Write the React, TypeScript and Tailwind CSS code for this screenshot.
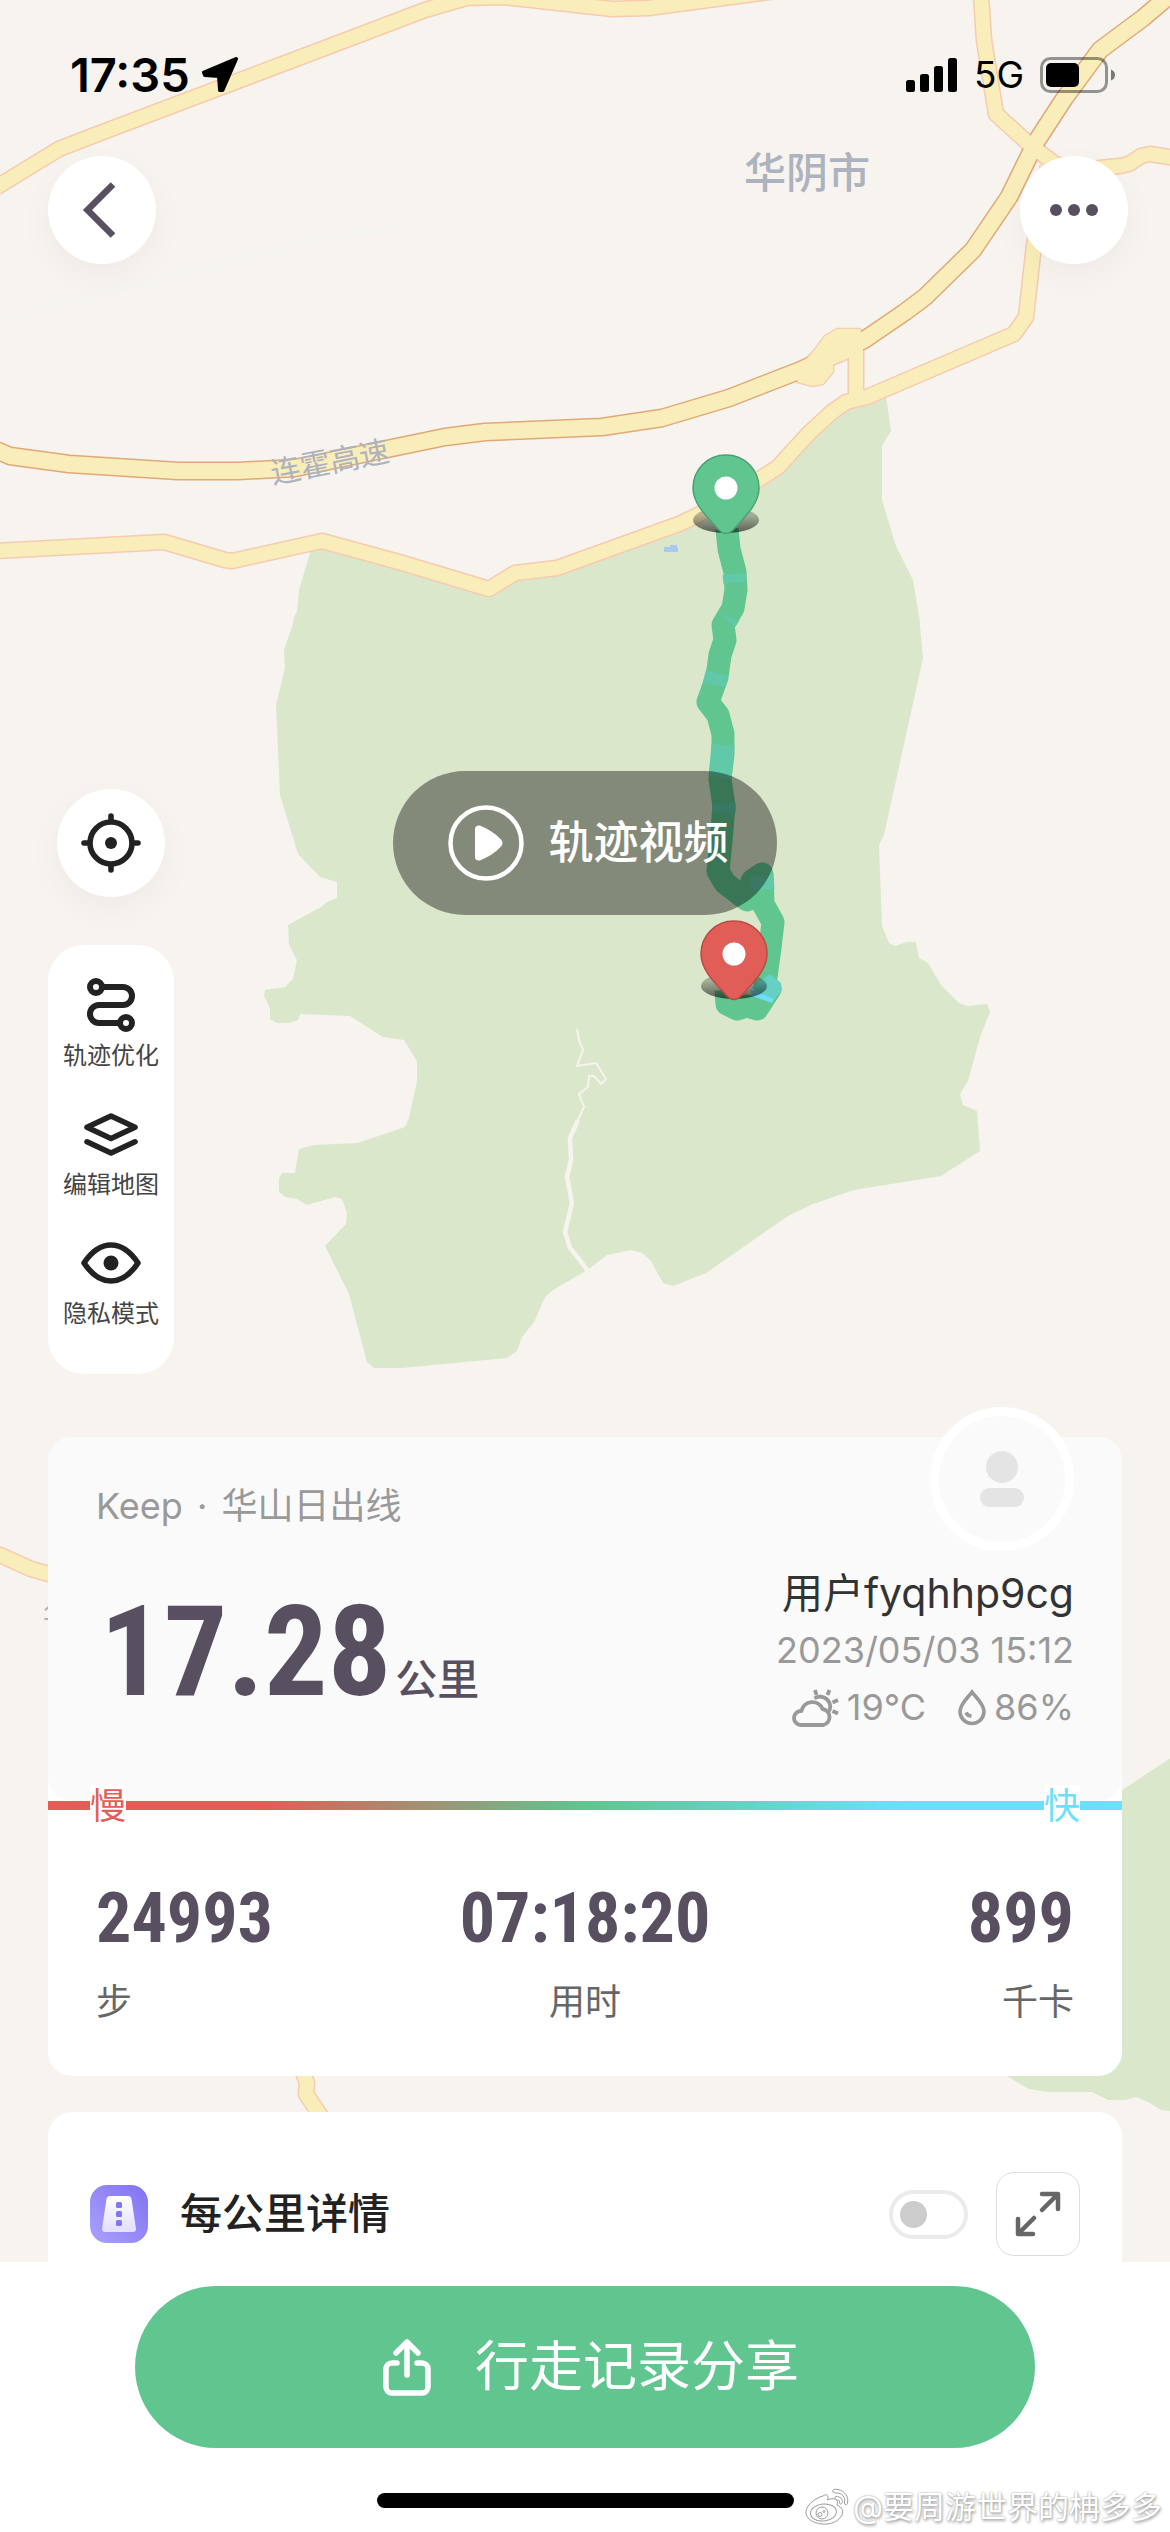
import type { ReactNode } from 'react';

const tools = [
  { label: '轨迹优化', icon: <RouteIcon /> },
  { label: '编辑地图', icon: <LayersIcon /> },
  { label: '隐私模式', icon: <EyeIcon /> },
];

const stats = [
  { value: '24993', label: '步', align: 'text-left' },
  { value: '07:18:20', label: '用时', align: 'text-center' },
  { value: '899', label: '千卡', align: 'text-right' },
];

const park =
  'M310 553 L322 541 L399 562 L489 589 L515 573 L557 568 L679 524 L755 482 L809 433 L842 405 L886 396 L891 431 L882 446 L882 500 L896 546 L913 580 L919 615 L923 658 L884 835 L879 845 L882 926 L889 943 L895 946 L907 942 L916 942 L919 958 L928 963 L941 985 L959 1003 L967 1006 L987 1004 L990 1012 L980 1037 L968 1081 L960 1094 L963 1105 L977 1111 L980 1151 L941 1176 L854 1190 L813 1204 L788 1216 L706 1273 L673 1286 L663 1283 L651 1261 L642 1253 L631 1250 L607 1255 L590 1268 L584 1272 L553 1290 L545 1297 L534 1322 L522 1337 L517 1351 L507 1358 L402 1368 L374 1368 L367 1362 L349 1294 L325 1246 L346 1224 L347 1213 L342 1199 L335 1197 L307 1205 L297 1199 L285 1197 L279 1192 L279 1178 L282 1173 L295 1173 L299 1149 L314 1145 L358 1143 L405 1127 L409 1118 L417 1081 L417 1061 L404 1040 L383 1037 L350 1016 L300 1014 L298 1020 L289 1023 L277 1023 L270 1019 L270 1008 L264 996 L265 990 L285 987 L293 979 L297 960 L289 945 L288 925 L321 907 L327 902 L337 898 L337 882 L320 877 L298 854 L280 795 L278 750 L276 705 L285 668 L284 650 L293 624 L294 617 L297 612 L299 590 Z';

const localRoads = [
  'M-4 188 L0 185 L59 149 L95 135 L325 48 L425 10 L466 -2 L504 -3 L612 9 L648 8 L746 -5 L830 -16',
  'M-4 551 L164 542 L225 560 L232 561 L322 541 L399 562 L489 589 L515 573 L557 568 L679 524 L700 514 L755 482 L778 467 L809 433 L832 412 L846 402 L867 397 L1014 334 L1026 317 L1034 245 L1048 166',
  'M980 -20 L984 40 L996 114 L1029 144 L1055 164 L1080 170 L1120 166 L1129 164 L1141 156 L1150 154 L1176 158',
  'M856 345 L856 398',
  'M-4 1554 L0 1555 L31 1569 L60 1577',
  'M300 2064 L307 2083 L306 2094 L322 2118',
];

const highway =
  'M-4 450 L10 456 L69 464 L178 471 L238 471 L295 468 L445 437 L485 432 L602 427 L662 418 L729 398 L801 370 L864 340 L905 312 L925 297 L973 250 L1009 197 L1036 142 L1064 99 L1100 50 L1143 18 L1176 -10';

const interchange =
  'M806 359 L813 352 L825 336 L837 329 L860 329 L866 345 L847 359 L833 365 L833 372 L823 384 L813 386 L797 382 Z';

const track =
  'M727 529 L729 549 L735 572 L736 590 L733 608 L723 625 L725 640 L720 655 L717 677 L708 702 L718 715 L723 734 L723 754 L720 779 L724 806 L721 841 L718 871 L725 883 L747 900 L752 881 L762 874 L763 904 L773 922 L770 948 L765 984 L770 989 L757 1009 L747 1006 L737 1009 L727 1004 L726 990';

function MapPin({ x, y, color, edge }: { x: number; y: number; color: string; edge: string }) {
  return (
    <g transform={`translate(${x} ${y})`}>
      <ellipse cx="0" cy="32" rx="33" ry="13" fill="url(#pinShadow)" />
      <path
        d="M0 -33 C19 -33 33 -18 33 0 C33 16 19 29 6 43 Q0 48 -6 43 C-19 29 -33 16 -33 0 C-33 -18 -19 -33 0 -33 Z"
        fill={color}
        stroke={edge}
        strokeWidth="1.5"
      />
      <circle r="11.5" fill="#fff" />
    </g>
  );
}

function TrackMap() {
  return (
    <svg
      aria-hidden="true"
      className="absolute inset-0 h-full w-full"
      viewBox="0 0 1170 2532"
      preserveAspectRatio="xMidYMin slice"
      fill="none"
    >
      <defs>
        <linearGradient id="pinShadow" x1="0" y1="0" x2="0" y2="1">
          <stop offset="0.3" stopColor="#000" stopOpacity="0.25" />
          <stop offset="1" stopColor="#000" stopOpacity="0.6" />
        </linearGradient>
      </defs>
      <path d={park} fill="#dae7cb" />
      <path
        d="M1180 1752 L1122 1790 L1000 1850 L1000 2072 L1029 2089 L1048 2092 L1092 2092 L1108 2100 L1125 2100 L1136 2097 L1148 2102 L1161 2110 L1180 2112 Z"
        fill="#dae7cb"
      />
      <path
        d="M577 1029 L579 1040 L583 1050 L577 1066 L596 1063 L606 1079 L601 1084 L594 1076 L589 1076 L588 1087 L579 1094 L584 1107 L577 1122"
        stroke="#f7f3ee"
        strokeWidth="2"
      />
      <path
        d="M578 1120 L570 1138 L571 1160 L567 1177 L572 1203 L565 1232 L570 1248 L579 1259 L590 1274"
        stroke="#f7f3ee"
        strokeWidth="4.5"
      />
      <path d="M0 320 L164 276 L325 237 L392 229" stroke="#f5f5f0" strokeWidth="3" />
      <path d="M664 547 h6 v-2 h7 v3 h1 v4 h-14 Z" fill="#a9c9ee" />

      <g strokeLinejoin="round">
        {localRoads.map((d) => (
          <path key={d} d={d} stroke="#f6cbb0" strokeWidth="17" />
        ))}
        <path d={interchange} stroke="#f6cbb0" strokeWidth="2.5" />
        <path d={highway} stroke="#e0a879" strokeWidth="19" />
        {localRoads.map((d) => (
          <path key={d} d={d} stroke="#f9edb9" strokeWidth="14" />
        ))}
        <path d={highway} stroke="#f9edb9" strokeWidth="16" />
        <path d={interchange} fill="#f9edb9" />
      </g>

      <g className="font-['Noto_Sans_CJK_SC',sans-serif]" fill="#adb2bf">
        <text x="744" y="188" fontSize="42" fontWeight="500">华阴市</text>
        <text x="43" y="1624" fontSize="26">华</text>
        <text fontSize="30" transform="translate(273 484) rotate(-11)">连霍高速</text>
      </g>

      <g strokeWidth="23" strokeLinejoin="round">
        <path d={track} stroke="#60c58f" />
        <g stroke="#61c9a8">
          <path d="M734 574 L735 583" />
          <path d="M717 673 L714 685" />
          <path d="M723 745 L720 777" />
          <path d="M724 803 L724 813" />
          <path d="M762 876 L763 890" />
        </g>
        <path d="M718 612 L739 621 L735 627 Z" fill="#61c9a8" />
      </g>
      <path d="M752 987 L770 974 L781 983 L782 990 L774 1000 L758 996 Z" fill="#66d0c4" />
      <path d="M750 989 L774 999 L772 1003 L752 996 Z" fill="#6ddefa" />
      <MapPin x={726} y={488} color="#60c58f" edge="#4ca077" />
      <MapPin x={734} y={954} color="#e15d57" edge="#bb4a45" />
    </svg>
  );
}

function RouteIcon() {
  return (
    <svg width="48" height="54" viewBox="0 0 48 54" fill="none" stroke="currentColor" strokeWidth="6">
      <circle cx="9" cy="9" r="6" />
      <path d="M15 9 H36 a9 9 0 0 1 0 18 H12 a9 9 0 0 0 0 18 H33" />
      <circle cx="39" cy="45" r="6" />
    </svg>
  );
}

function LayersIcon() {
  return (
    <svg width="54" height="43" viewBox="0 0 54 43" fill="none" stroke="currentColor" strokeWidth="5.6" strokeLinecap="round" strokeLinejoin="round">
      <path d="M3 14.3 L27 3 L51 14.3 L27 25.5 Z" />
      <path d="M3 28.8 L27 40 L51 28.8" />
    </svg>
  );
}

function EyeIcon() {
  return (
    <svg width="60" height="42" viewBox="0 0 60 42" fill="none" stroke="currentColor" strokeWidth="5.6" strokeLinejoin="round">
      <path d="M3 21 C11 9 20 3 30 3 S49 9 57 21 C49 33 40 39 30 39 S11 33 3 21 Z" />
      <circle cx="30" cy="21" r="7.5" fill="currentColor" stroke="none" />
    </svg>
  );
}

function LocateIcon() {
  return (
    <svg width="60" height="60" viewBox="0 0 60 60" fill="none" stroke="currentColor" strokeWidth="5.6" strokeLinecap="round">
      <circle cx="30" cy="30" r="21" />
      <circle cx="30" cy="30" r="6" fill="currentColor" stroke="none" />
      <path d="M30 3 V8 M30 52 V57 M3 30 H8 M52 30 H57" />
    </svg>
  );
}

function WeatherIcon() {
  return (
    <svg width="47" height="38" viewBox="0 0 47 38" fill="none" stroke="currentColor" strokeWidth="3.8">
      <path d="M8.5 36 A7 7 0 0 1 9.5 22 A11 11 0 0 1 30.5 20 A8.2 8.2 0 0 1 31.5 36 Z" strokeLinejoin="round" />
      <path d="M22.5 9.5 A10 10 0 0 1 36 24" />
      <path d="M23 1 L24.5 6 M37.5 1 L35.5 6 M40.5 13.5 L46 11 M40.5 22 L46 24.5" />
    </svg>
  );
}

function DropIcon() {
  return (
    <svg width="28" height="37" viewBox="0 0 28 37" fill="none" stroke="currentColor" strokeWidth="3.6">
      <path d="M14 3 C10 8.5 2 15 2 22.5 a12 12 0 0 0 24 0 C26 15 18 8.5 14 3 Z" />
      <path d="M8 23.5 Q9.5 27 13.5 27" />
    </svg>
  );
}

function KilometerIcon() {
  return (
    <svg width="58" height="58" viewBox="0 0 58 58" className="shrink-0">
      <defs>
        <linearGradient id="kmBg" x1="1" y1="0" x2="0" y2="1">
          <stop offset="0" stopColor="#8172f3" />
          <stop offset="1" stopColor="#a9a1fa" />
        </linearGradient>
        <linearGradient id="kmRoad" x1="0" y1="0" x2="0" y2="1">
          <stop offset="0" stopColor="#fff" />
          <stop offset="1" stopColor="#e2defc" />
        </linearGradient>
      </defs>
      <rect width="58" height="58" rx="17" fill="url(#kmBg)" />
      <path d="M20 11 H38 Q41 11 41.5 14 L46 44 Q46 47 43 47 H15 Q12 47 12 44 L16.5 14 Q17 11 20 11 Z" fill="url(#kmRoad)" />
      <g fill="#8476f3">
        <rect x="26" y="17" width="6" height="6" rx="1.5" />
        <rect x="26" y="26" width="6" height="6" rx="1.5" />
        <rect x="26" y="35" width="6" height="6" rx="1.5" />
      </g>
    </svg>
  );
}

function WeiboIcon() {
  return (
    <svg width="44" height="38" viewBox="0 0 44 38" fill="#fff" stroke="#9c9c9c" strokeWidth="1">
      <path d="M18 8 C22 5 24 8 22.5 12 C29 9 34 11 32 17 C37 19 39 23 37 27 C34 33 26 37 17 36 C7 35 0 30 1 23 C2 17 10 10 18 8 Z" />
      <ellipse cx="18.5" cy="24.5" rx="13" ry="8.5" transform="rotate(-6 18.5 24.5)" />
      <circle cx="17" cy="25" r="6" />
      <circle cx="15" cy="26.5" r="2" />
      <circle cx="19" cy="23.5" r="1" />
      <path d="M28 4 C27 1 30 1 33 1.5 C40 3 44 9 42.5 15 C42 18 39 17 39.5 14 C40.5 9 37 5 32 5 C30 5 29 5 28 4 Z" />
      <path d="M30 10 C30 8 32 8 34 9 C37 10 38 13 37 15 C36 17 34 16 34.5 14 C35 12 33 12 31.5 12 C30.5 12 30 11 30 10 Z" />
    </svg>
  );
}

function RoundButton({ label, children }: { label: string; children: ReactNode }) {
  return (
    <button
      type="button"
      aria-label={label}
      className="flex size-[108px] items-center justify-center rounded-full bg-white shadow-[0_12px_36px_rgba(0,0,0,0.04)]"
    >
      {children}
    </button>
  );
}

function StatusBar() {
  return (
    <div className="flex items-center justify-between pt-12 pr-[54px] pb-[54px] pl-[70px] text-black">
      <div className="flex items-center gap-3">
        <span className="text-[47px] leading-[54px] font-semibold">17:35</span>
        <svg width="36" height="36" viewBox="0 0 36 36" stroke="currentColor" strokeWidth="4" strokeLinejoin="round">
          <path d="M34 2 L2 15.5 L3 18 L17 19 L18 33 L20.5 33 Z" />
        </svg>
      </div>
      <div className="flex items-center gap-4">
        <svg width="52" height="34" viewBox="0 0 52 34">
          <rect y="22" width="9" height="12" rx="2.5" />
          <rect x="14" y="16" width="9" height="18" rx="2.5" />
          <rect x="28" y="8" width="9" height="26" rx="2.5" />
          <rect x="42" width="9" height="34" rx="2.5" />
        </svg>
        <span className="text-[37px] leading-[54px]">5G</span>
        <svg width="76" height="36" viewBox="0 0 76 36">
          <rect x="1.5" y="1.5" width="65" height="33" rx="9" fill="none" stroke="#000" strokeOpacity="0.4" strokeWidth="3" />
          <rect x="6" y="6" width="33" height="24" rx="5" />
          <path d="M71 12.5 Q75 14 75 18 T71 23.5 Z" fillOpacity="0.5" />
        </svg>
      </div>
    </div>
  );
}

export default function App() {
  return (
    <main className="relative flex min-h-screen flex-col overflow-hidden bg-[#f7f3ee] font-['Inter','Noto_Sans_CJK_SC',sans-serif]">
      <TrackMap />

      <div className="relative">
        <StatusBar />
        <header className="flex items-center justify-between pr-[42px] pl-12 text-[#584f60]">
          <RoundButton label="返回">
            <svg width="108" height="108" viewBox="0 0 108 108" fill="none" stroke="currentColor" strokeWidth="6.5">
              <path d="M65 28.5 L39.5 54 L65 79.5" />
            </svg>
          </RoundButton>
          <RoundButton label="更多">
            <svg width="48" height="12" viewBox="0 0 48 12" fill="currentColor">
              <circle cx="6" cy="6" r="6" />
              <circle cx="24" cy="6" r="6" />
              <circle cx="42" cy="6" r="6" />
            </svg>
          </RoundButton>
        </header>
      </div>

      <section className="relative mt-[507px] grid grid-cols-[126px_1fr_126px] items-start px-12">
        <div className="flex flex-col items-center gap-12 pt-[18px] text-[#222]">
          <RoundButton label="定位">
            <LocateIcon />
          </RoundButton>
          <div className="flex w-full flex-col gap-[33px] rounded-[36px] bg-white pt-[30px] pb-[45px]">
            {tools.map((tool) => (
              <button key={tool.label} type="button" className="flex flex-col items-center gap-[6px]">
                <span className="flex h-[60px] items-center">{tool.icon}</span>
                <span className="text-[24px] leading-[30px] text-[#444]">{tool.label}</span>
              </button>
            ))}
          </div>
        </div>
        <button
          type="button"
          className="flex h-[144px] items-center gap-6 justify-self-center rounded-full bg-black/40 pr-12 pl-[55px] text-white"
        >
          <svg width="76" height="76" viewBox="0 0 76 76" fill="none">
            <circle cx="38" cy="38" r="35.5" stroke="currentColor" strokeWidth="4.5" />
            <path d="M27 24 Q27 20 32 20.5 C40 24 47 28 53 34.5 Q56 38 53 41.5 C47 48 40 52 32 55.5 Q27 56 27 52 Z" fill="currentColor" />
          </svg>
          <span className="text-[45px] leading-[60px] font-medium">轨迹视频</span>
        </button>
      </section>

      <div className="relative flex flex-col gap-9 px-12 pt-[63px]">
        <article className="rounded-3xl bg-white text-[#584f60]">
          <div className="flex items-start justify-between rounded-3xl bg-[#fafafa] px-12 pb-[65px]">
            <div className="pt-[45px]">
              <h1 className="text-[36px] leading-[48px] text-[#999]">
                Keep <span className="mx-1">·</span> 华山日出线
              </h1>
              <p className="mt-[72px] flex items-baseline gap-1 pl-1 leading-[100px]">
                <span className="font-['Roboto_Condensed','Roboto',sans-serif] text-[126px] font-bold">17.28</span>
                <span className="text-[42px] font-medium">公里</span>
              </p>
            </div>
            <div className="-mt-[30px] flex flex-col items-end">
              <div className="mb-[14px] flex size-[144px] items-center justify-center rounded-full border-[9px] border-white bg-[#fafafa]">
                <svg width="44" height="56" viewBox="0 0 44 56" fill="#e4e4e4">
                  <circle cx="22" cy="16" r="16" />
                  <rect y="37" width="44" height="19" rx="9.5" />
                </svg>
              </div>
              <p className="text-[41px] leading-[57px] text-[#333]">用户fyqhhp9cg</p>
              <p className="text-[36px] leading-[57px] text-[#999]">2023/05/03 15:12</p>
              <p className="flex items-center gap-2 text-[36px] leading-[57px] text-[#999]">
                <WeatherIcon />
                <span className="mr-6">19°C</span>
                <DropIcon />
                <span>86%</span>
              </p>
            </div>
          </div>

          <div className="relative h-[9px] bg-[linear-gradient(90deg,#e25d57_20%,#60c58f_50%,#6ddffc_80%)] text-[36px] leading-[42px]">
            <span className="absolute -top-4 left-[42px] bg-white text-[#e25d57]">慢</span>
            <span className="absolute -top-4 right-[42px] bg-white text-[#6ddffc]">快</span>
          </div>

          <dl className="grid grid-cols-3 px-12 pt-[72px] pb-[50px]">
            {stats.map((stat) => (
              <div key={stat.label} className={`flex flex-col-reverse gap-6 ${stat.align}`}>
                <dt className="text-[36px] leading-[48px] text-[#666]">{stat.label}</dt>
                <dd className="font-['Roboto_Condensed','Roboto',sans-serif] text-[70px] leading-[72px] font-bold">
                  {stat.value}
                </dd>
              </div>
            ))}
          </dl>
        </article>

        <article className="flex items-center rounded-t-3xl bg-white px-[42px] pt-[60px] pb-[6px]">
          <KilometerIcon />
          <h2 className="ml-8 text-[42px] leading-[60px] font-medium text-[#222]">每公里详情</h2>
          <input
            type="checkbox"
            role="switch"
            aria-label="每公里详情"
            className="ml-auto h-[49px] w-[79px] appearance-none rounded-full border-4 border-[#ebebeb] bg-white before:mt-[7px] before:ml-[7px] before:block before:size-[27px] before:rounded-full before:bg-[#ccc]"
          />
          <button
            type="button"
            aria-label="展开"
            className="ml-7 flex size-[84px] items-center justify-center rounded-[18px] border border-[#ddd] text-[#666]"
          >
            <svg width="46" height="46" viewBox="0 0 46 46" fill="none" stroke="currentColor" strokeWidth="4.5" strokeLinecap="round" strokeLinejoin="round">
              <path d="M27 3 H43 V18 M42 4 L27 19" />
              <path d="M3 28 V43 H18 M4 42 L19 27" />
            </svg>
          </button>
        </article>
      </div>

      <footer className="relative mt-auto flex flex-col items-center bg-white px-[135px] pt-6 pb-6">
        <button
          type="button"
          className="flex h-[162px] w-full items-center justify-center gap-11 rounded-full bg-[#60c58f] pl-3 text-white"
        >
          <svg width="48" height="57" viewBox="0 0 48 57" fill="none" stroke="currentColor" strokeWidth="5.5" strokeLinecap="round" strokeLinejoin="round">
            <path d="M14 24 H9 a6 6 0 0 0 -6 6 V48 a6 6 0 0 0 6 6 H39 a6 6 0 0 0 6 -6 V30 a6 6 0 0 0 -6 -6 H34" />
            <path d="M24 36 V4 M13 14 L24 3 L35 14" />
          </svg>
          <span className="text-[54px] leading-[72px]">行走记录分享</span>
        </button>
        <div className="mt-[45px] h-[15px] w-[417px] rounded-full bg-black" />
        <p className="absolute right-2 bottom-1 flex items-center gap-1 text-[31px] leading-[42px] whitespace-nowrap text-white [text-shadow:0_0_2px_#999,1px_2px_3px_#aaa]">
          <WeiboIcon />
          @要周游世界的柟多多
        </p>
      </footer>
    </main>
  );
}
